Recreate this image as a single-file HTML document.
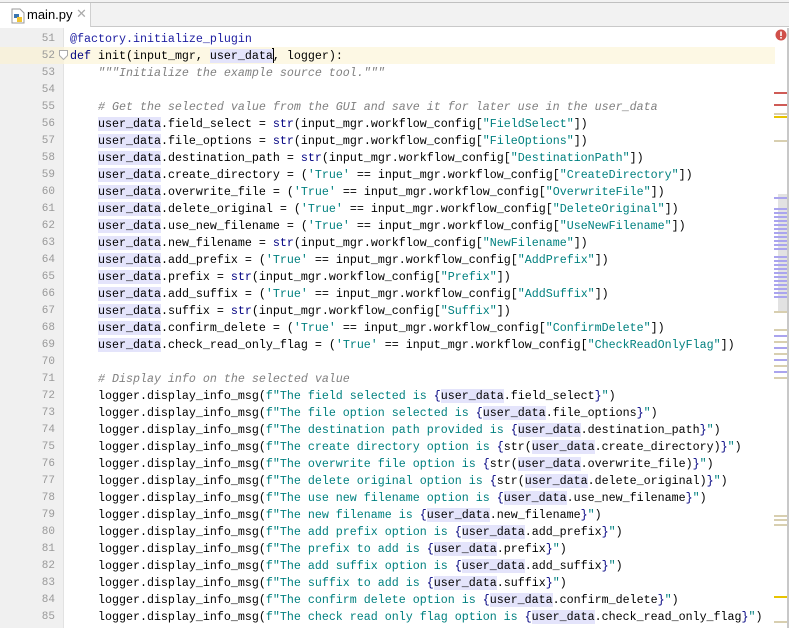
<!DOCTYPE html>
<html><head><meta charset="utf-8"><style>
*{margin:0;padding:0;box-sizing:border-box}
body{width:789px;height:628px;overflow:hidden;background:#fff;font-family:"Liberation Mono",monospace;font-size:11.67px;position:relative}
#tabs{position:absolute;left:0;top:0;width:789px;height:27px;background:#f2f2f2;border-bottom:1px solid #c9c9c9}
#tabs:before{content:"";position:absolute;left:0;top:2px;right:0;border-top:1px solid #c0c0c0}
#tab{position:absolute;left:0;top:3px;width:91px;height:24px;background:#fff;border-right:1px solid #d0d0d0;font-family:"Liberation Sans",sans-serif;font-size:13px;color:#000}
#tab .t{position:absolute;left:27px;top:4px}
#tab .x{position:absolute;left:76px;top:3px;color:#aaa;font-size:13px}
#gut{position:absolute;left:0;top:28px;width:64px;height:600px;background:#f0f0f0;border-right:1px solid #e2e2e2}
#hl{position:absolute;left:0;top:47px;width:775px;height:17px;background:#fdf8e4}
#hlg{position:absolute;left:0;top:47px;width:64px;height:17px;background:#f7f1dc}
.ln{position:absolute;left:0;width:55px;text-align:right;color:#999;height:17px;line-height:17px;font-size:11px;margin-top:1px}
.l{position:absolute;left:70px;white-space:pre;height:17px;line-height:17px;color:#000;margin-top:1px}
.u{background:#e4e4fb}
.s{color:#00807f}
.b{color:#000080}
.c{color:#808080;font-style:italic}
.d{color:#1d1da0}
.m{position:absolute;left:774px;width:14px;height:2px}
#sb{position:absolute;left:778px;top:194px;width:10px;height:118px;background:#e2e2e2}
#vs{position:absolute;left:787px;top:28px;width:2px;height:600px;background:#c8c8c8}
</style></head><body>
<div id="tabs"><div id="tab">
<svg style="position:absolute;left:11px;top:5px" width="14" height="16" viewBox="0 0 14 16"><path d="M1 1h8l4 4v10H1z" fill="#fff" stroke="#999"/><rect x="3" y="6" width="5" height="4" fill="#3a75b0"/><rect x="6" y="9" width="5" height="5" fill="#f2c530"/></svg>
<span class="t">main.py</span><span class="x">✕</span></div></div>
<div id="gut"></div>
<div id="hl"></div><div id="hlg"></div>
<div id="sb"></div>
<svg style="position:absolute;left:775px;top:29px" width="12" height="12"><circle cx="6" cy="6" r="5.5" fill="#d0504a"/><rect x="5.2" y="2.5" width="1.6" height="4.5" fill="#fff"/><rect x="5.2" y="8" width="1.6" height="1.6" fill="#fff"/></svg>
<svg style="position:absolute;left:59px;top:50px" width="9" height="10"><path d="M0.5 0.5h8v5l-4 4l-4-4z" fill="#fff" stroke="#aaa"/></svg>
<div style="position:absolute;left:272px;top:48px;width:2px;height:15px;background:#000"></div>

<div class="ln" style="top:30px">51</div><div class="l d" style="top:30px">@factory.initialize_plugin</div>
<div class="ln" style="top:47px">52</div><div class="l" style="top:47px"><span class="b">def</span> init(input_mgr, <span class="u">user_data</span>, logger):</div>
<div class="ln" style="top:64px">53</div><div class="l c" style="top:64px">    """Initialize the example source tool."""</div>
<div class="ln" style="top:81px">54</div>
<div class="ln" style="top:98px">55</div><div class="l c" style="top:98px">    # Get the selected value from the GUI and save it for later use in the user_data</div>
<div class="ln" style="top:115px">56</div><div class="l" style="top:115px">    <span class="u">user_data</span>.field_select = <span class="b">str</span>(input_mgr.workflow_config[<span class="s">"FieldSelect"</span>])</div>
<div class="ln" style="top:132px">57</div><div class="l" style="top:132px">    <span class="u">user_data</span>.file_options = <span class="b">str</span>(input_mgr.workflow_config[<span class="s">"FileOptions"</span>])</div>
<div class="ln" style="top:149px">58</div><div class="l" style="top:149px">    <span class="u">user_data</span>.destination_path = <span class="b">str</span>(input_mgr.workflow_config[<span class="s">"DestinationPath"</span>])</div>
<div class="ln" style="top:166px">59</div><div class="l" style="top:166px">    <span class="u">user_data</span>.create_directory = (<span class="s">'True'</span> == input_mgr.workflow_config[<span class="s">"CreateDirectory"</span>])</div>
<div class="ln" style="top:183px">60</div><div class="l" style="top:183px">    <span class="u">user_data</span>.overwrite_file = (<span class="s">'True'</span> == input_mgr.workflow_config[<span class="s">"OverwriteFile"</span>])</div>
<div class="ln" style="top:200px">61</div><div class="l" style="top:200px">    <span class="u">user_data</span>.delete_original = (<span class="s">'True'</span> == input_mgr.workflow_config[<span class="s">"DeleteOriginal"</span>])</div>
<div class="ln" style="top:217px">62</div><div class="l" style="top:217px">    <span class="u">user_data</span>.use_new_filename = (<span class="s">'True'</span> == input_mgr.workflow_config[<span class="s">"UseNewFilename"</span>])</div>
<div class="ln" style="top:234px">63</div><div class="l" style="top:234px">    <span class="u">user_data</span>.new_filename = <span class="b">str</span>(input_mgr.workflow_config[<span class="s">"NewFilename"</span>])</div>
<div class="ln" style="top:251px">64</div><div class="l" style="top:251px">    <span class="u">user_data</span>.add_prefix = (<span class="s">'True'</span> == input_mgr.workflow_config[<span class="s">"AddPrefix"</span>])</div>
<div class="ln" style="top:268px">65</div><div class="l" style="top:268px">    <span class="u">user_data</span>.prefix = <span class="b">str</span>(input_mgr.workflow_config[<span class="s">"Prefix"</span>])</div>
<div class="ln" style="top:285px">66</div><div class="l" style="top:285px">    <span class="u">user_data</span>.add_suffix = (<span class="s">'True'</span> == input_mgr.workflow_config[<span class="s">"AddSuffix"</span>])</div>
<div class="ln" style="top:302px">67</div><div class="l" style="top:302px">    <span class="u">user_data</span>.suffix = <span class="b">str</span>(input_mgr.workflow_config[<span class="s">"Suffix"</span>])</div>
<div class="ln" style="top:319px">68</div><div class="l" style="top:319px">    <span class="u">user_data</span>.confirm_delete = (<span class="s">'True'</span> == input_mgr.workflow_config[<span class="s">"ConfirmDelete"</span>])</div>
<div class="ln" style="top:336px">69</div><div class="l" style="top:336px">    <span class="u">user_data</span>.check_read_only_flag = (<span class="s">'True'</span> == input_mgr.workflow_config[<span class="s">"CheckReadOnlyFlag"</span>])</div>
<div class="ln" style="top:353px">70</div>
<div class="ln" style="top:370px">71</div><div class="l c" style="top:370px">    # Display info on the selected value</div>
<div class="ln" style="top:387px">72</div><div class="l" style="top:387px">    logger.display_info_msg(<span class="s">f"The field selected is <span class="b">{</span><span class="u" style="color:#000">user_data</span><span style="color:#000">.field_select</span><span class="b">}</span>"</span>)</div>
<div class="ln" style="top:404px">73</div><div class="l" style="top:404px">    logger.display_info_msg(<span class="s">f"The file option selected is <span class="b">{</span><span class="u" style="color:#000">user_data</span><span style="color:#000">.file_options</span><span class="b">}</span>"</span>)</div>
<div class="ln" style="top:421px">74</div><div class="l" style="top:421px">    logger.display_info_msg(<span class="s">f"The destination path provided is <span class="b">{</span><span class="u" style="color:#000">user_data</span><span style="color:#000">.destination_path</span><span class="b">}</span>"</span>)</div>
<div class="ln" style="top:438px">75</div><div class="l" style="top:438px">    logger.display_info_msg(<span class="s">f"The create directory option is <span class="b">{</span><span style="color:#000">str(</span><span class="u" style="color:#000">user_data</span><span style="color:#000">.create_directory)</span><span class="b">}</span>"</span>)</div>
<div class="ln" style="top:455px">76</div><div class="l" style="top:455px">    logger.display_info_msg(<span class="s">f"The overwrite file option is <span class="b">{</span><span style="color:#000">str(</span><span class="u" style="color:#000">user_data</span><span style="color:#000">.overwrite_file)</span><span class="b">}</span>"</span>)</div>
<div class="ln" style="top:472px">77</div><div class="l" style="top:472px">    logger.display_info_msg(<span class="s">f"The delete original option is <span class="b">{</span><span style="color:#000">str(</span><span class="u" style="color:#000">user_data</span><span style="color:#000">.delete_original)</span><span class="b">}</span>"</span>)</div>
<div class="ln" style="top:489px">78</div><div class="l" style="top:489px">    logger.display_info_msg(<span class="s">f"The use new filename option is <span class="b">{</span><span class="u" style="color:#000">user_data</span><span style="color:#000">.use_new_filename</span><span class="b">}</span>"</span>)</div>
<div class="ln" style="top:506px">79</div><div class="l" style="top:506px">    logger.display_info_msg(<span class="s">f"The new filename is <span class="b">{</span><span class="u" style="color:#000">user_data</span><span style="color:#000">.new_filename</span><span class="b">}</span>"</span>)</div>
<div class="ln" style="top:523px">80</div><div class="l" style="top:523px">    logger.display_info_msg(<span class="s">f"The add prefix option is <span class="b">{</span><span class="u" style="color:#000">user_data</span><span style="color:#000">.add_prefix</span><span class="b">}</span>"</span>)</div>
<div class="ln" style="top:540px">81</div><div class="l" style="top:540px">    logger.display_info_msg(<span class="s">f"The prefix to add is <span class="b">{</span><span class="u" style="color:#000">user_data</span><span style="color:#000">.prefix</span><span class="b">}</span>"</span>)</div>
<div class="ln" style="top:557px">82</div><div class="l" style="top:557px">    logger.display_info_msg(<span class="s">f"The add suffix option is <span class="b">{</span><span class="u" style="color:#000">user_data</span><span style="color:#000">.add_suffix</span><span class="b">}</span>"</span>)</div>
<div class="ln" style="top:574px">83</div><div class="l" style="top:574px">    logger.display_info_msg(<span class="s">f"The suffix to add is <span class="b">{</span><span class="u" style="color:#000">user_data</span><span style="color:#000">.suffix</span><span class="b">}</span>"</span>)</div>
<div class="ln" style="top:591px">84</div><div class="l" style="top:591px">    logger.display_info_msg(<span class="s">f"The confirm delete option is <span class="b">{</span><span class="u" style="color:#000">user_data</span><span style="color:#000">.confirm_delete</span><span class="b">}</span>"</span>)</div>
<div class="ln" style="top:608px">85</div><div class="l" style="top:608px">    logger.display_info_msg(<span class="s">f"The check read only flag option is <span class="b">{</span><span class="u" style="color:#000">user_data</span><span style="color:#000">.check_read_only_flag</span><span class="b">}</span>"</span>)</div>

<div class="m" style="top:92px;background:#cf5b56"></div>
<div class="m" style="top:104px;background:#cf5b56"></div>
<div class="m" style="top:113px;background:#d8cfb0"></div>
<div class="m" style="top:116px;background:#e8c400"></div>
<div class="m" style="top:140px;background:#d8cfb0"></div>
<div class="m" style="top:197px;background:#aaa4ee"></div>
<div style="position:absolute;left:774px;top:208px;width:14px;height:42px;background:repeating-linear-gradient(#aaa4ee 0 2px,transparent 2px 4px)"></div>
<div style="position:absolute;left:774px;top:256px;width:14px;height:42px;background:repeating-linear-gradient(#aaa4ee 0 2px,transparent 2px 4px)"></div>
<div class="m" style="top:311px;background:#d8cfb0"></div>
<div style="position:absolute;left:774px;top:329px;width:14px;height:52px;background:repeating-linear-gradient(#d8cfb0 0 2px,transparent 2px 6px,#aaa4ee 6px 8px,transparent 8px 12px)"></div>
<div class="m" style="top:515px;background:#d8cfb0"></div>
<div class="m" style="top:519px;background:#d8cfb0"></div>
<div class="m" style="top:524px;background:#d8cfb0"></div>
<div class="m" style="top:596px;background:#e8c400"></div>
<div class="m" style="top:621px;background:#d8cfb0"></div>
<div id="vs"></div>
</body></html>
